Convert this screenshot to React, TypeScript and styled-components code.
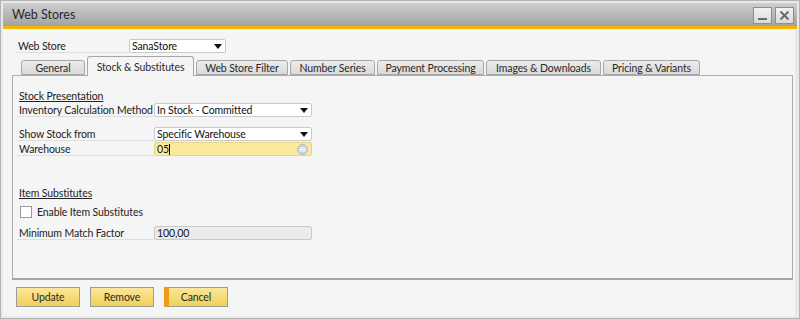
import React from 'react';
import styled, {createGlobalStyle} from 'styled-components';

const GlobalStyle = createGlobalStyle`
  html, body {
    margin: 0;
    padding: 0;
    background: #ffffff;
  }
  body {
    font-family: Lato, "Liberation Sans", sans-serif;
    font-size: 10.5px;
    letter-spacing: -0.12px;
    color: #222;
  }
`;

const Window = styled.div`
  box-sizing: border-box;
  width: 800px;
  height: 319px;
  padding: 2px;
  background: #e9e9e9;
  border: 1px solid #b4b4b4;
  display: flex;
  flex-direction: column;
`;

const TitleBar = styled.div`
  height: 23px;
  flex: none;
  display: flex;
  align-items: center;
  justify-content: space-between;
  padding: 0 3px 0 9px;
  background: linear-gradient(#cfcfcf, #a2a2a2);
  border-bottom: 3px solid #f5b400;
`;

const Title = styled.span`
  font-size: 12.5px;
  letter-spacing: 0;
  color: #2a2a2a;
`;

const WinButtons = styled.div`
  display: flex;
  gap: 3px;
  padding-top: 2px;
`;

const WinButton = styled.div`
  box-sizing: border-box;
  width: 19px;
  height: 17px;
  display: flex;
  align-items: center;
  justify-content: center;
  background: linear-gradient(#f2f2f2, #d9d9d9);
  border: 1px solid #8e8e8e;
`;

const Body = styled.div`
  flex: 1;
  display: flex;
  flex-direction: column;
  background: #f5f5f5;
  padding: 10px 0 0 9px;
  width: 783px;
`;

const FieldRow = styled.div`
  display: flex;
  align-items: center;
  height: 14px;
`;

const Label = styled.div<{$width: number}>`
  width: ${p => p.$width}px;
  height: 14px;
  line-height: 14px;
  padding-left: 2px;
  box-sizing: border-box;
  border-bottom: 1px solid #dedede;
  white-space: nowrap;
  flex: none;
`;

const Field = styled.div<{$variant?: 'plain' | 'active' | 'disabled'; $width: number}>`
  box-sizing: border-box;
  width: ${p => p.$width}px;
  height: 14px;
  display: flex;
  align-items: center;
  justify-content: space-between;
  padding: 0 3px 0 2px;
  border: 1px solid ${p => (p.$variant === 'active' ? '#e4d48a' : '#c9c9c9')};
  border-radius: 2px;
  background: ${p =>
    p.$variant === 'active' ? '#fde99b' : p.$variant === 'disabled' ? '#ebebeb' : '#ffffff'};
  color: #111;
  white-space: nowrap;
`;

const Arrow = styled.span`
  width: 0;
  height: 0;
  border-left: 4px solid transparent;
  border-right: 4px solid transparent;
  border-top: 5px solid #111;
`;

const Caret = styled.span`
  display: inline-block;
  width: 1px;
  height: 11px;
  background: #000;
  vertical-align: middle;
`;

const HeaderForm = styled.div`
  padding-left: 4px;
`;

const TabStrip = styled.div`
  display: flex;
  align-items: flex-end;
  gap: 2px;
  margin-top: 3px;
  padding-left: 9px;
  height: 19px;
  position: relative;
  z-index: 1;
`;

const Tab = styled.div<{$active?: boolean; $width: number}>`
  box-sizing: border-box;
  width: ${p => p.$width}px;
  height: ${p => (p.$active ? 20 : 15)}px;
  margin-bottom: ${p => (p.$active ? -1 : 0)}px;
  display: flex;
  align-items: center;
  justify-content: center;
  padding-top: ${p => (p.$active ? 1 : 0)}px;
  border: 1px solid #a7a7a7;
  border-bottom: ${p => (p.$active ? 'none' : '1px solid #a7a7a7')};
  border-radius: 3px 3px 0 0;
  background: ${p => (p.$active ? '#f5f5f5' : 'linear-gradient(#ececec, #d9d9d9)')};
  color: #2a2a2a;
  white-space: nowrap;
`;

const Panel = styled.div`
  box-sizing: border-box;
  width: 781px;
  height: 205px;
  border: 1px solid #ababab;
  border-bottom: 2px solid #a4a4a4;
  padding: 13px 0 0 4px;
  display: flex;
  flex-direction: column;
`;

const Section = styled.div`
  display: flex;
  flex-direction: column;
`;

const SectionTitle = styled.div`
  height: 14px;
  line-height: 14px;
  padding-left: 2px;
  text-decoration: underline;
`;

const CheckRow = styled.label`
  display: flex;
  align-items: center;
  gap: 5px;
  height: 14px;
  padding-left: 3px;
`;

const CheckBox = styled.span`
  box-sizing: border-box;
  width: 12px;
  height: 12px;
  border: 1px solid #9a9a9a;
  background: #fff;
`;

const ButtonRow = styled.div`
  display: flex;
  gap: 10px;
  padding: 7px 0 0 4px;
`;

const Button = styled.div<{$primary?: boolean}>`
  box-sizing: border-box;
  width: 64px;
  height: 20px;
  display: flex;
  align-items: center;
  justify-content: center;
  border: 1px solid #9d9d9d;
  background: linear-gradient(#fbe79a, #f2cf5a);
  color: #2a2a2a;
  ${p =>
    p.$primary &&
    `border-left: 5px solid #f09a1a;
     padding-right: 4px;`}
`;

const Spacer = styled.div<{$h: number}>`
  height: ${p => p.$h}px;
  flex: none;
`;

const LinkIcon = () => (
  <svg width="11" height="11" viewBox="0 0 11 11">
    <circle cx="5.5" cy="5.5" r="5" fill="#c9d2de" stroke="#aab5c4" strokeWidth="0.8" />
    <line x1="2.5" y1="3.8" x2="8.5" y2="3.8" stroke="#fff" strokeWidth="0.9" />
    <line x1="2" y1="5.5" x2="9" y2="5.5" stroke="#fff" strokeWidth="0.9" />
    <line x1="2.5" y1="7.2" x2="8.5" y2="7.2" stroke="#fff" strokeWidth="0.9" />
  </svg>
);

const tabs = [
  {name: 'General', width: 64},
  {name: 'Stock & Substitutes', width: 107, active: true},
  {name: 'Web Store Filter', width: 92},
  {name: 'Number Series', width: 85},
  {name: 'Payment Processing', width: 107},
  {name: 'Images & Downloads', width: 115},
  {name: 'Pricing & Variants', width: 97},
];

const App: React.FC = () => {
  return (
    <>
      <GlobalStyle />
      <Window>
        <TitleBar>
          <Title>Web Stores</Title>
          <WinButtons>
            <WinButton>
              <svg width="11" height="11" viewBox="0 0 11 11">
                <rect x="1" y="8" width="9" height="2" fill="#6a6a6a" />
              </svg>
            </WinButton>
            <WinButton>
              <svg width="11" height="11" viewBox="0 0 11 11">
                <path d="M1.5 1.5 L9.5 9.5 M9.5 1.5 L1.5 9.5" stroke="#6a6a6a" strokeWidth="2" />
              </svg>
            </WinButton>
          </WinButtons>
        </TitleBar>
        <Body>
          <HeaderForm>
            <FieldRow>
              <Label $width={113}>Web Store</Label>
              <Field $width={97}>
                SanaStore
                <Arrow />
              </Field>
            </FieldRow>
          </HeaderForm>
          <TabStrip>
            {tabs.map(t => (
              <Tab key={t.name} $active={t.active} $width={t.width}>
                {t.name}
              </Tab>
            ))}
          </TabStrip>
          <Panel>
            <Section>
              <SectionTitle>Stock Presentation</SectionTitle>
              <FieldRow>
                <Label $width={137}>Inventory Calculation Method</Label>
                <Field $width={158}>
                  In Stock - Committed
                  <Arrow />
                </Field>
              </FieldRow>
              <Spacer $h={10} />
              <FieldRow>
                <Label $width={137}>Show Stock from</Label>
                <Field $width={158}>
                  Specific Warehouse
                  <Arrow />
                </Field>
              </FieldRow>
              <Spacer $h={1} />
              <FieldRow>
                <Label $width={137}>Warehouse</Label>
                <Field $width={158} $variant="active">
                  <span>
                    05
                    <Caret />
                  </span>
                  <LinkIcon />
                </Field>
              </FieldRow>
            </Section>
            <Spacer $h={30} />
            <Section>
              <SectionTitle>Item Substitutes</SectionTitle>
              <Spacer $h={5} />
              <CheckRow>
                <CheckBox />
                Enable Item Substitutes
              </CheckRow>
              <Spacer $h={7} />
              <FieldRow>
                <Label $width={137}>Minimum Match Factor</Label>
                <Field $width={158} $variant="disabled">
                  100,00
                </Field>
              </FieldRow>
            </Section>
          </Panel>
          <ButtonRow>
            <Button>Update</Button>
            <Button>Remove</Button>
            <Button $primary>Cancel</Button>
          </ButtonRow>
        </Body>
      </Window>
    </>
  );
};

export default App;
